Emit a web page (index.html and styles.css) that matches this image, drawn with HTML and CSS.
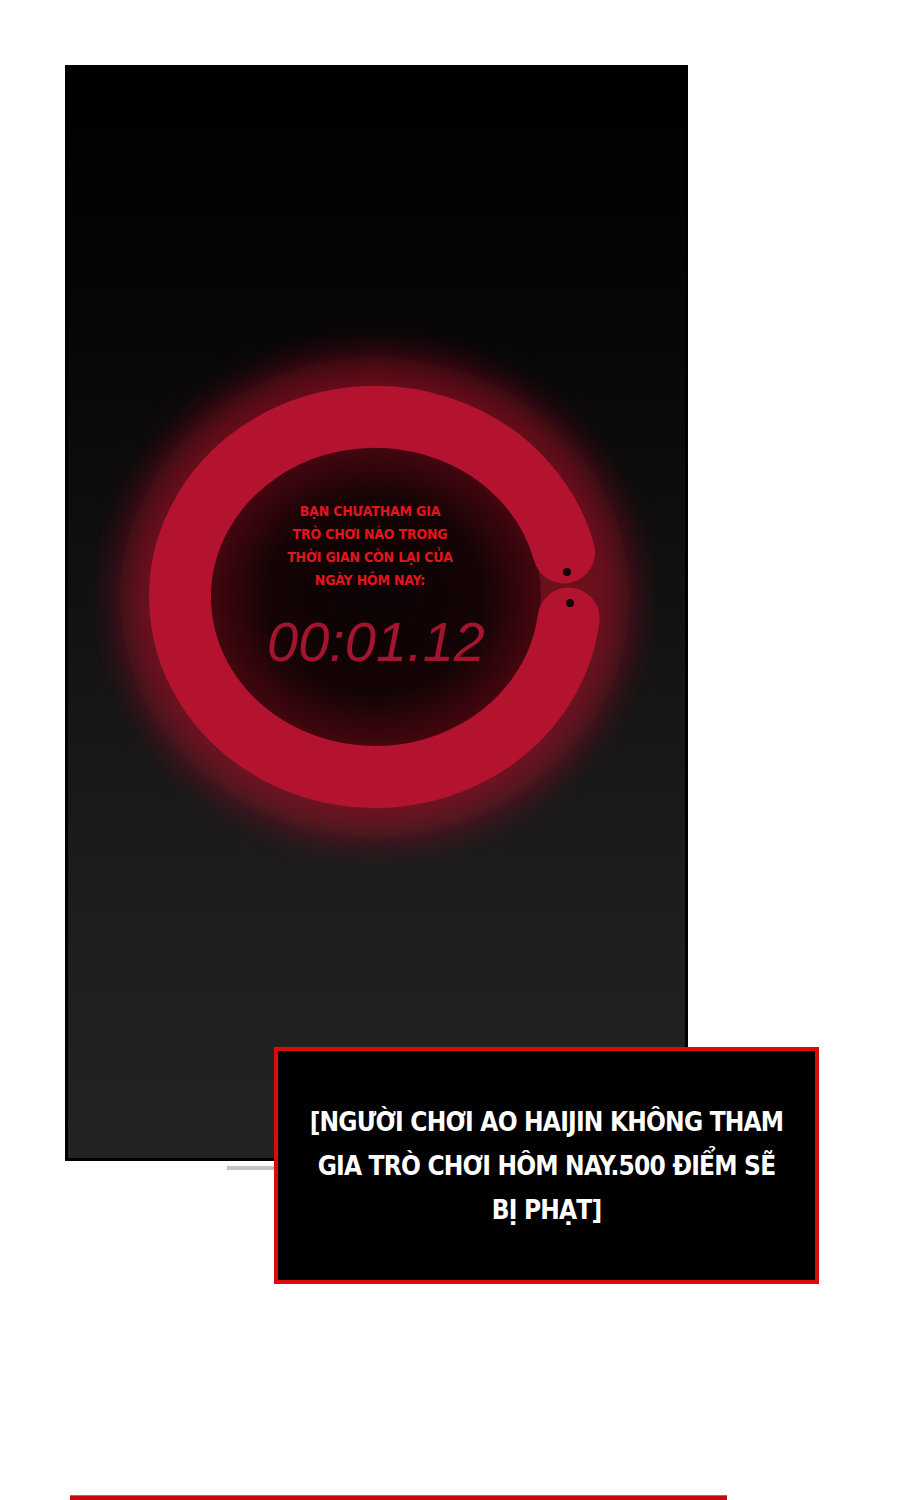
FILE: index.html
```html
<!DOCTYPE html>
<html lang="vi">
<head>
<meta charset="utf-8">
<title>Timer</title>
<link rel="stylesheet" href="styles.css">
</head>
<body>
<div class="stage">
  <div class="phone">
    <div class="ring-wrap">
      <svg class="ring" width="560" height="560" viewBox="0 0 560 560">
        <defs>
          <radialGradient id="inner" cx="50%" cy="50%" r="50%">
            <stop offset="0%" stop-color="#0b0304"/>
            <stop offset="65%" stop-color="#150405"/>
            <stop offset="100%" stop-color="#45060f"/>
          </radialGradient>
          <filter id="blur" x="-30%" y="-30%" width="160%" height="160%">
            <feGaussianBlur stdDeviation="18"/>
          </filter>
        </defs>
        <ellipse cx="280" cy="280" rx="197" ry="182" fill="none" stroke="#c80f2a" stroke-width="115" opacity="0.5" filter="url(#blur)"/>
        <ellipse cx="280" cy="280" rx="166" ry="151" fill="url(#inner)"/>
        <path d="M469 235.5 A195 180 0 1 0 473.6 301.5" fill="none" stroke="#b3132f" stroke-width="62" stroke-linecap="round"/>
        <circle cx="472" cy="255" r="4" fill="#140204"/>
        <circle cx="475" cy="286" r="4" fill="#140204"/>
      </svg>
      <div class="ring-text">
        <p class="notice">BẠN CHƯATHAM GIA<br>TRÒ CHƠI NÀO TRONG<br>THỜI GIAN CÒN LẠI CỦA<br>NGÀY HÔM NAY:</p>
        <p class="timer">00:01.12</p>
      </div>
    </div>
  </div>
  <div class="home-bar"></div>
  <div class="dialog">
    <p class="dialog-text">[NGƯỜI CHƠI AO HAIJIN KHÔNG THAM<br>GIA TRÒ CHƠI HÔM NAY.500 ĐIỂM SẼ<br>BỊ PHẠT]</p>
  </div>
  <div class="bottom-rule"></div>
</div>
</body>
</html>
```
FILE: styles.css
```css
html, body {
  margin: 0;
  padding: 0;
  background: #ffffff;
}

.stage {
  position: relative;
  width: 900px;
  height: 1500px;
  padding-top: 65px;
  box-sizing: border-box;
  overflow: hidden;
}

.phone {
  margin-left: 65px;
  width: 623px;
  height: 1096px;
  box-sizing: border-box;
  border: 3px solid #000;
  background: linear-gradient(to bottom, #000000 0%, #050505 20%, #121212 50%, #1d1d1d 75%, #232323 100%);
  overflow: hidden;
}

.ring-wrap {
  display: grid;
  width: 560px;
  height: 560px;
  margin: 249px 0 0 27px;
}

.ring {
  grid-area: 1 / 1;
  display: block;
}

.ring-text {
  grid-area: 1 / 1;
  align-self: start;
  justify-self: center;
  padding-top: 183px;
  text-align: center;
}

.notice {
  margin: 0 0 0 -10px;
  font-family: "DejaVu Sans Condensed", "Liberation Sans", sans-serif;
  font-weight: bold;
  font-size: 14px;
  line-height: 23px;
  color: #e3141c;
  letter-spacing: -0.2px;
}

.timer {
  margin: 18px 0 0 2px;
  font-family: "Liberation Sans", Arial, sans-serif;
  font-style: italic;
  font-size: 56px;
  line-height: 64px;
  color: #a3142f;
}

.home-bar {
  margin: 5px 0 0 227px;
  width: 120px;
  height: 4px;
  background: #c4c4c4;
}

.dialog {
  position: absolute;
  left: 274px;
  top: 1047px;
  width: 545px;
  height: 237px;
  box-sizing: border-box;
  border: 4px solid #d80c0c;
  background: #000;
  display: flex;
  align-items: center;
  justify-content: center;
}

.dialog-text {
  margin: 0;
  font-family: "DejaVu Sans Condensed", "Liberation Sans", sans-serif;
  font-weight: bold;
  font-size: 26px;
  line-height: 44px;
  color: #fff;
  text-align: center;
  letter-spacing: -0.8px;
}

.bottom-rule {
  margin: 325px 0 0 70px;
  width: 657px;
  height: 5px;
  background: #c40a0a;
  border-top: 1px solid #e05050;
  box-sizing: border-box;
}
```
